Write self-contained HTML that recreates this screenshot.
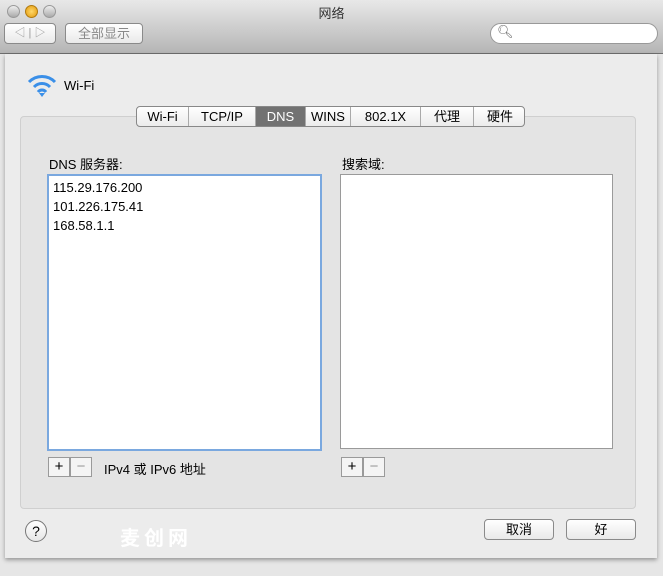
<!DOCTYPE html><html><head><meta charset="utf-8"><style>
body{margin:0;width:663px;height:576px;background:#e6e6e6;font-family:"Liberation Sans","Noto Sans CJK SC",sans-serif;font-size:13px;position:relative;overflow:hidden}
.a{position:absolute}
.tb{left:0;top:0;width:663px;height:53px;background:linear-gradient(#e8e8e8,#b5b5b5);border-bottom:1px solid #6e6e6e}
.sheet{left:5px;top:54px;width:652px;height:504px;background:#ececec;box-shadow:0 2px 4px rgba(0,0,0,.35)}
.btn{background:linear-gradient(#fff,#e9e9e9);border:1px solid #8a8a8a;border-radius:4px;text-align:center;line-height:19px;font-size:13px;box-sizing:border-box}
.list{background:#fff;border:1px solid #9a9a9a;box-sizing:border-box}
.pm{width:22px;height:20px;border:1px solid #9a9a9a;box-sizing:border-box;background:#f4f4f4;text-align:center;line-height:17px;font-size:15px}
.tab{position:absolute;top:0;height:19px;line-height:19px;text-align:center;border-right:1px solid #aaa;font-size:13px;box-sizing:border-box}
</style></head><body>
<div class="a tb"></div>
<div class="a" style="left:7px;top:5px;width:11px;height:11px;border-radius:50%;background:linear-gradient(#eee,#aaa);border:1px solid #999"></div>
<div class="a" style="left:25px;top:5px;width:11px;height:11px;border-radius:50%;background:radial-gradient(#ffd86a,#e39a0b);border:1px solid #b07a10"></div>
<div class="a" style="left:43px;top:5px;width:11px;height:11px;border-radius:50%;background:linear-gradient(#eee,#aaa);border:1px solid #999"></div>
<div class="a" style="left:0;top:3px;width:663px;text-align:center;font-size:13px;color:#333">网络</div>
<div class="a btn" style="left:4px;top:23px;width:52px;height:21px;color:#999;font-size:11px">◁ | ▷</div>
<div class="a btn" style="left:65px;top:23px;width:78px;height:21px;color:#888">全部显示</div>
<div class="a" style="left:490px;top:23px;width:168px;height:21px;border-radius:11px;background:#fff;border:1px solid #999;box-sizing:border-box"><span style="position:absolute;left:6px;top:0;color:#666;font-size:13px">🔍︎</span></div>
<div class="a sheet"></div>
<svg class="a" style="left:26px;top:72px" width="32" height="28"><g fill="none" stroke="#3a8fe8" stroke-width="3"><path d="M3 10 A18 18 0 0 1 29 10"/><path d="M8 15 A11 11 0 0 1 24 15"/><path d="M12 20 A5 5 0 0 1 20 20"/></g><path d="M16 25 L13 21 L19 21Z" fill="#3a8fe8"/></svg>
<div class="a" style="left:64px;top:78px">Wi-Fi</div>
<div class="a" style="left:20px;top:116px;width:616px;height:393px;border:1px solid #cfcfcf;border-radius:4px;background:#e4e4e4;box-sizing:border-box"></div>
<div class="a" style="left:136px;top:106px;width:389px;height:21px;border:1px solid #888;border-radius:4px;background:linear-gradient(#fff,#ececec);box-sizing:border-box;overflow:hidden;font-size:14px">
<div class="tab" style="left:0;width:52px">Wi-Fi</div>
<div class="tab" style="left:52px;width:67px">TCP/IP</div>
<div class="tab" style="left:119px;width:50px;background:#727272;color:#fff">DNS</div>
<div class="tab" style="left:169px;width:45px">WINS</div>
<div class="tab" style="left:214px;width:70px">802.1X</div>
<div class="tab" style="left:284px;width:53px">代理</div>
<div class="tab" style="left:337px;width:52px;border:none">硬件</div>
</div>
<div class="a" style="left:49px;top:154px">DNS 服务器:</div>
<div class="a" style="left:342px;top:154px">搜索域:</div>
<div class="a list" style="left:47px;top:174px;width:275px;height:277px;border:2px solid #7aa8df;padding:2px 4px;line-height:19px;font-size:13px">115.29.176.200<br>101.226.175.41<br>168.58.1.1</div>
<div class="a list" style="left:340px;top:174px;width:273px;height:275px"></div>
<div class="a pm" style="left:48px;top:457px">+</div><div class="a pm" style="left:70px;top:457px;color:#999">−</div>
<div class="a" style="left:104px;top:459px">IPv4 或 IPv6 地址</div>
<div class="a pm" style="left:341px;top:457px">+</div><div class="a pm" style="left:363px;top:457px;color:#999">−</div>
<div class="a" style="left:25px;top:520px;width:20px;height:20px;border-radius:50%;border:1px solid #777;background:linear-gradient(#fff,#e6e6e6);text-align:center;line-height:20px;font-size:14px">?</div>
<div class="a" style="left:120px;top:522px;color:#fff;font-size:20px;font-weight:bold;letter-spacing:4px">麦创网</div>
<div class="a btn" style="left:484px;top:519px;width:70px;height:21px">取消</div>
<div class="a btn" style="left:566px;top:519px;width:70px;height:21px">好</div>
</body></html>
